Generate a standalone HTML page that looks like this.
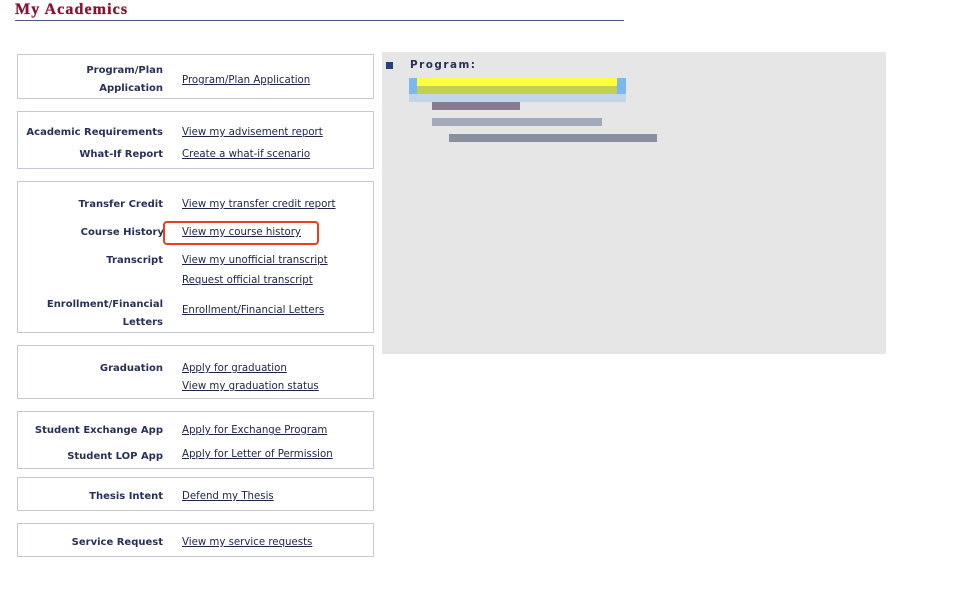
<!DOCTYPE html>
<html><head><meta charset="utf-8"><style>
body{margin:0;width:965px;height:592px;background:#fff;position:relative;overflow:hidden;font-family:"DejaVu Sans","Liberation Sans",sans-serif;}
.t{position:absolute;left:15px;top:1px;font:bold 16px "Liberation Serif",serif;color:#8c1030;letter-spacing:1.1px;-webkit-text-stroke:0.3px #8c1030}
.hr{position:absolute;left:15px;top:20px;width:609px;height:1px;background:#4d5585}
.b{position:absolute;left:17px;width:355px;border:1px solid #c3c9d9}
.l{position:absolute;right:802px;font-weight:bold;font-size:10px;color:#28305a;line-height:14px;text-align:right;white-space:nowrap}
.a{position:absolute;left:182px;font-size:10.2px;color:#1e2548;text-decoration:underline;line-height:14px;white-space:nowrap}
.g{position:absolute;left:382px;top:52px;width:504px;height:302px;background:#e6e6e6}
.p{position:absolute;height:8px}
</style></head><body>
<div class="t">My Academics</div><div class="hr"></div>
<div class="b" style="top:54px;height:43px"></div>
<div class="b" style="top:111px;height:56px"></div>
<div class="b" style="top:181px;height:150px"></div>
<div class="b" style="top:345px;height:52px"></div>
<div class="b" style="top:411px;height:56px"></div>
<div class="b" style="top:477px;height:32px"></div>
<div class="b" style="top:523px;height:32px"></div>

<div class="l" style="top:64px">Program/Plan</div>
<div class="l" style="top:82px">Application</div>
<div class="a" style="top:74px">Program/Plan Application</div>
<div class="l" style="top:126px">Academic Requirements</div>
<div class="a" style="top:126px">View my advisement report</div>
<div class="l" style="top:148px">What-If Report</div>
<div class="a" style="top:148px">Create a what-if scenario</div>
<div class="l" style="top:198px">Transfer Credit</div>
<div class="a" style="top:198px">View my transfer credit report</div>
<div class="l" style="top:226px;right:801px">Course History</div>
<div class="a" style="top:226px">View my course history</div>
<div style="position:absolute;left:163px;top:221px;width:152px;height:20px;border:2px solid #e8401c;border-radius:4px"></div>
<div class="l" style="top:254px">Transcript</div>
<div class="a" style="top:254px">View my unofficial transcript</div>
<div class="a" style="top:274px">Request official transcript</div>
<div class="l" style="top:298px">Enrollment/Financial</div>
<div class="l" style="top:316px">Letters</div>
<div class="a" style="top:304px">Enrollment/Financial Letters</div>
<div class="l" style="top:362px">Graduation</div>
<div class="a" style="top:362px">Apply for graduation</div>
<div class="a" style="top:380px">View my graduation status</div>
<div class="l" style="top:424px">Student Exchange App</div>
<div class="a" style="top:424px">Apply for Exchange Program</div>
<div class="l" style="top:450px">Student LOP App</div>
<div class="a" style="top:448px">Apply for Letter of Permission</div>
<div class="l" style="top:490px">Thesis Intent</div>
<div class="a" style="top:490px">Defend my Thesis</div>
<div class="l" style="top:536px">Service Request</div>
<div class="a" style="top:536px">View my service requests</div>

<div class="g"></div>
<div style="position:absolute;left:386px;top:62px;width:7px;height:7px;background:#27407a"></div>
<div style="position:absolute;left:410px;top:59px;font-weight:bold;font-size:10.4px;color:#28305a;letter-spacing:1.5px">Program:</div>
<div class="p" style="left:409px;top:78px;width:217px;background:#ffff40"></div>
<div class="p" style="left:409px;top:78px;width:8px;height:16px;background:#7ab8f0"></div>
<div class="p" style="left:617px;top:78px;width:9px;height:16px;background:#7ab8f0"></div>
<div class="p" style="left:417px;top:86px;width:200px;background:#c0d050"></div>
<div class="p" style="left:409px;top:94px;width:217px;background:#c0d6e8"></div>
<div class="p" style="left:432px;top:102px;width:88px;background:#8a7a90"></div>
<div class="p" style="left:432px;top:118px;width:170px;background:#a0aab8"></div>
<div class="p" style="left:449px;top:134px;width:208px;background:#8a8fa0"></div>
</body></html>
